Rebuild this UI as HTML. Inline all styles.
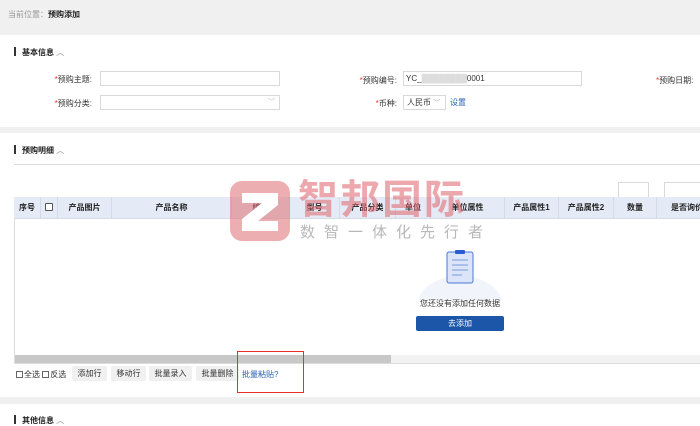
<!DOCTYPE html>
<html><head><meta charset="utf-8"><style>
*{margin:0;padding:0;box-sizing:border-box}
body{width:700px;height:424px;overflow:hidden;background:#fff;font-family:"Liberation Sans","Noto Sans CJK SC",sans-serif;font-size:8px;color:#333;position:relative}
.a{position:absolute}
.g{background:#f0f0f0}
.title{font-weight:bold;font-size:8px;color:#222}
.bar{width:2px;height:9px;background:#333}
.lbl{font-size:8px;color:#333;text-align:right}
.lbl i{color:#e33;font-style:normal}
.inp{border:1px solid #d9d9d9;background:#fff;height:15px}
.th{position:absolute;top:0;height:22px;line-height:22px;text-align:center;font-weight:bold;font-size:8px;color:#222;border-right:1px solid #d5dbe5}
.btn{position:absolute;top:366px;height:15px;line-height:15px;background:#f0f0f0;border-radius:2px;text-align:center;font-size:8px;color:#333}
.cb{display:inline-block;width:7px;height:7px;border:1px solid #666;vertical-align:-1px;margin-right:1px;background:#fff}
</style></head><body>
<div class="a g" style="left:0;top:0;width:700px;height:35px"></div>
<div class="a" style="left:8px;top:9px;font-size:8px;color:#999">当前位置：<b style="color:#222">预购添加</b></div>

<div class="a bar" style="left:14px;top:47px"></div>
<div class="a title" style="left:22px;top:47px">基本信息 <span style="font-weight:normal;color:#888">︿</span></div>
<div class="a lbl" style="left:40px;top:74px;width:52px"><i>*</i>预购主题:</div>
<div class="a inp" style="left:100px;top:71px;width:180px"></div>
<div class="a lbl" style="left:40px;top:98px;width:52px"><i>*</i>预购分类:</div>
<div class="a inp" style="left:100px;top:95px;width:180px"><span style="position:absolute;right:4px;top:1px;color:#bbb;font-size:7px">﹀</span></div>
<div class="a lbl" style="left:340px;top:75px;width:57px"><i>*</i>预购编号:</div>
<div class="a inp" style="left:403px;top:71px;width:179px;padding-left:2px;line-height:13px;color:#333">YC_<span style="color:#ddd">████████</span>0001</div>
<div class="a lbl" style="left:656px;top:75px;width:52px;text-align:left"><i>*</i>预购日期:</div>
<div class="a lbl" style="left:340px;top:98px;width:57px"><i>*</i>币种:</div>
<div class="a inp" style="left:403px;top:95px;width:43px;padding-left:3px;line-height:13px">人民币 <span style="color:#aaa;font-size:7px">﹀</span></div>
<div class="a" style="left:450px;top:97px;color:#2a62b0">设置</div>

<div class="a g" style="left:0;top:127px;width:700px;height:6px"></div>
<div class="a bar" style="left:14px;top:145px"></div>
<div class="a title" style="left:22px;top:145px">预购明细 <span style="font-weight:normal;color:#888">︿</span></div>
<div class="a" style="left:14px;top:164px;width:686px;height:1px;background:#ddd"></div>
<div class="a inp" style="left:618px;top:182px;width:31px;height:16px"></div>
<div class="a inp" style="left:664px;top:182px;width:40px;height:16px"></div>

<div class="a" style="left:14px;top:197px;width:690px;height:167px;border:1px solid #dcdcdc"></div>
<div class="a" style="left:14px;top:197px;width:690px;height:22px;background:#e4ebf6;border-bottom:1px solid #d5dbe5">
<div class="th" style="left:0;width:27px">序号</div>
<div class="th" style="left:27px;width:17px"><span class="cb" style="width:8px;height:8px;border-color:#555;border-radius:1px"></span></div>
<div class="th" style="left:44px;width:54px">产品图片</div>
<div class="th" style="left:98px;width:120px">产品名称</div>
<div class="th" style="left:218px;width:58px">编号</div>
<div class="th" style="left:276px;width:50px">型号</div>
<div class="th" style="left:326px;width:56px">产品分类</div>
<div class="th" style="left:382px;width:35px">单位</div>
<div class="th" style="left:417px;width:74px">单位属性</div>
<div class="th" style="left:491px;width:54px">产品属性1</div>
<div class="th" style="left:545px;width:55px">产品属性2</div>
<div class="th" style="left:600px;width:43px">数量</div>
<div class="th" style="left:643px;width:60px;border:none">是否询价</div>
</div>
<div class="a" style="left:15px;top:355px;width:689px;height:8px;background:#f2f2f2"></div>
<div class="a" style="left:15px;top:355px;width:376px;height:8px;background:#c8c8c8"></div>

<!-- watermark -->
<div class="a" style="left:230px;top:181px;width:60px;height:60px;border-radius:12px;background:rgba(225,120,125,.6)"></div>
<svg class="a" style="left:230px;top:181px" width="60" height="60"><path d="M12 12H48V24L28 40H48V50H12V38L32 22H12Z" fill="#fff"/></svg>
<div class="a" style="left:298px;top:176px;font-size:40px;font-weight:bold;color:rgba(225,110,118,.6);letter-spacing:2px;line-height:48px">智邦国际</div>
<div class="a" style="left:300px;top:224px;font-size:15px;color:rgba(160,160,160,.75);letter-spacing:9px;line-height:18px">数智一体化先行者</div>

<!-- empty -->
<svg class="a" style="left:415px;top:248px" width="90" height="52">
<ellipse cx="45" cy="56" rx="42" ry="28" fill="#f1f4fb"/>
<rect x="32" y="4" width="26" height="31" rx="2" fill="#dbe4f8" stroke="#4a78d8" stroke-width="1"/>
<rect x="40" y="2" width="10" height="4" rx="1" fill="#2a5cd0"/>
<path d="M37 12h16M37 17h16M37 22h16M37 27h10" stroke="#7a9be0" stroke-width="1"/>
</svg>
<div class="a" style="left:400px;top:298px;width:120px;text-align:center;font-size:8px;color:#333">您还没有添加任何数据</div>
<div class="a" style="left:416px;top:316px;width:88px;height:15px;background:#1c56a8;border-radius:2px;color:#fff;text-align:center;line-height:15px;font-size:8px">去添加</div>

<div class="a" style="left:16px;top:369px;font-size:8px"><span class="cb"></span>全选 <span class="cb"></span>反选</div>
<div class="btn" style="left:72px;width:35px">添加行</div>
<div class="btn" style="left:111px;width:35px">移动行</div>
<div class="btn" style="left:149px;width:43px">批量录入</div>
<div class="btn" style="left:196px;width:43px">批量删除</div>
<div class="a" style="left:242px;top:369px;color:#2a62b0;font-size:8px">批量粘贴?</div>
<div class="a" style="left:237px;top:351px;width:67px;height:42px;border:1px solid #e8302a"></div>

<div class="a g" style="left:0;top:397px;width:700px;height:7px"></div>
<div class="a bar" style="left:14px;top:415px"></div>
<div class="a title" style="left:22px;top:415px">其他信息 <span style="font-weight:normal;color:#888">︿</span></div>
</body></html>
